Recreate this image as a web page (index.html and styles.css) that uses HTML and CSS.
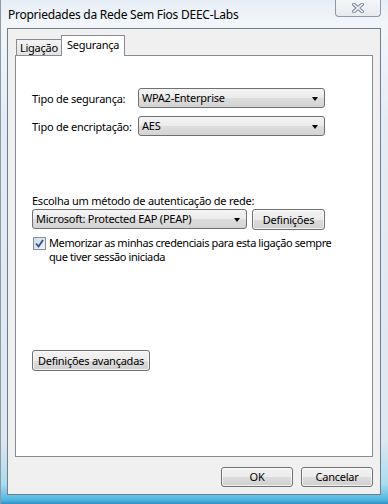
FILE: index.html
```html
<!DOCTYPE html>
<html lang="pt">
<head>
    <meta charset="UTF-8">
    <title>Propriedades da Rede Sem Fios DEEC-Labs</title>
    <link rel="stylesheet" href="styles.css">
</head>
<body>
    <div class="window">
        <div class="titlebar">
            <span class="title">Propriedades da Rede Sem Fios DEEC-Labs</span>
            <div class="close-btn">
                <svg width="12" height="10" viewBox="0 0 12 10">
                    <path d="M2 1.5 L10 8.5 M10 1.5 L2 8.5" stroke="#7a8796" stroke-width="3.6" stroke-linecap="square"/>
                    <path d="M2 1.5 L10 8.5 M10 1.5 L2 8.5" stroke="#f4f6f9" stroke-width="1.6" stroke-linecap="square"/>
                </svg>
            </div>
        </div>
        <div class="client">
            <div class="tabs">
                <div class="tab">Ligação</div>
                <div class="tab active">Segurança</div>
            </div>
            <div class="panel">
                <div class="field-row">
                    <span class="field-label">Tipo de segurança:</span>
                    <div class="combo combo-short">WPA2-Enterprise<span class="arrow"></span></div>
                </div>
                <div class="field-row">
                    <span class="field-label">Tipo de encriptação:</span>
                    <div class="combo combo-short">AES<span class="arrow"></span></div>
                </div>

                <div class="auth">
                    <div class="auth-label">Escolha um método de autenticação de rede:</div>
                    <div class="auth-row">
                        <div class="combo combo-long">Microsoft: Protected EAP (PEAP)<span class="arrow"></span></div>
                        <div class="btn btn-settings">Definições</div>
                    </div>
                    <div class="check-row">
                        <span class="checkbox">
                            <svg width="9" height="9" viewBox="0 0 9 9">
                                <path d="M1 4.5 L3.5 7.5 L8 1" fill="none" stroke="#3b4f8a" stroke-width="1.8"/>
                            </svg>
                        </span>
                        <span class="check-text">Memorizar as minhas credenciais para esta ligação sempre que tiver sessão iniciada</span>
                    </div>
                </div>

                <div class="btn btn-advanced">Definições avançadas</div>
            </div>
            <div class="dialog-buttons">
                <div class="btn btn-dialog">OK</div>
                <div class="btn btn-dialog">Cancelar</div>
            </div>
        </div>
    </div>
</body>
</html>
```

FILE: styles.css
```css
body {
    margin: 0;
    font-family: "Noto Sans", "Open Sans", sans-serif;
    font-size: 11px;
    letter-spacing: -0.25px;
    color: #000;
}
.window {
    width: 388px;
    height: 504px;
    box-sizing: border-box;
    padding: 0 7px 9px 7px;
    display: flex;
    flex-direction: column;
    border-left: 1px solid #8c9aa6;
    background: linear-gradient(to bottom, #e6eef5 0, #f2f6fa 24px, #e4ecf3 120px, #dde7ef 440px, #a9dcee 484px, #4fb6e0 500px, #2f8fc4 504px);
}
.titlebar {
    height: 28px;
    display: flex;
    align-items: flex-start;
    margin-left: -1px;
}
.title {
    padding: 6px 0 0 1px;
    font-size: 12px;
    color: #000;
}
.close-btn {
    margin-left: auto;
    width: 46px;
    height: 17px;
    box-sizing: border-box;
    border: 1px solid #8d99a5;
    border-top: none;
    border-radius: 0 0 4px 4px;
    background: linear-gradient(to bottom, #f4f6f9, #e6ebf1);
    display: flex;
    align-items: center;
    justify-content: center;
}
.client {
    flex: 1;
    display: flex;
    flex-direction: column;
    background: #f0f0f0;
    border: 1px solid #6f7d8a;
    padding: 6px 7px 7px 7px;
    margin-left: -1px;
}
.tabs {
    height: 21px;
    display: flex;
    align-items: flex-end;
    padding-left: 1px;
}
.tab {
    height: 17px;
    box-sizing: border-box;
    padding: 0 3px;
    border: 1px solid #898c95;
    border-right: none;
    border-bottom: none;
    background: linear-gradient(to bottom, #f3f3f3, #e3e3e3);
    line-height: 16px;
}
.tab.active {
    height: 21px;
    padding: 0 5px;
    border-right: 1px solid #898c95;
    background: #fff;
    line-height: 18px;
    position: relative;
    z-index: 1;
}
.panel {
    flex: 1;
    margin-top: -1px;
    border: 1px solid #898c95;
    background: #fff;
    padding: 32px 0 0 16px;
}
.field-row {
    display: flex;
    align-items: center;
    height: 20px;
    margin-bottom: 8px;
}
.field-label {
    width: 106px;
}
.combo {
    position: relative;
    height: 20px;
    box-sizing: border-box;
    border: 1px solid #707070;
    border-radius: 3px;
    background: linear-gradient(to bottom, #f4f4f4 0, #ebebeb 50%, #dddddd 51%, #d4d4d4 100%);
    padding-left: 3px;
    line-height: 18px;
}
.combo-short {
    width: 187px;
}
.combo-long {
    width: 215px;
}
.arrow {
    position: absolute;
    right: 6px;
    top: 8px;
    border-left: 3.5px solid transparent;
    border-right: 3.5px solid transparent;
    border-top: 4px solid #000;
}
.auth {
    margin-top: 57px;
}
.auth-label {
    height: 16px;
    line-height: 16px;
}
.auth-row {
    display: flex;
    align-items: flex-start;
    gap: 5px;
}
.btn {
    height: 21px;
    box-sizing: border-box;
    border: 1px solid #707070;
    border-radius: 3px;
    background: linear-gradient(to bottom, #f2f2f2 0, #ebebeb 50%, #dddddd 51%, #cfcfcf 100%);
    box-shadow: inset 0 0 0 1px rgba(255,255,255,0.7);
    text-align: center;
    line-height: 19px;
}
.btn-settings {
    width: 73px;
}
.check-row {
    display: flex;
    align-items: flex-start;
    margin-top: 6px;
}
.checkbox {
    width: 13px;
    height: 13px;
    box-sizing: border-box;
    margin: 1px 3px 0 1px;
    border: 1px solid #8f8f8f;
    background: linear-gradient(135deg, #c9dcef, #eef4fa);
    display: flex;
    align-items: center;
    justify-content: center;
    flex-shrink: 0;
}
.check-text {
    width: 300px;
    line-height: 14px;
    letter-spacing: -0.4px;
}
.btn-advanced {
    width: 118px;
    margin-top: 86px;
}
.dialog-buttons {
    display: flex;
    justify-content: flex-end;
    gap: 8px;
    margin-top: 10px;
}
.btn-dialog {
    width: 72px;
    height: 20px;
    line-height: 18px;
}
```
